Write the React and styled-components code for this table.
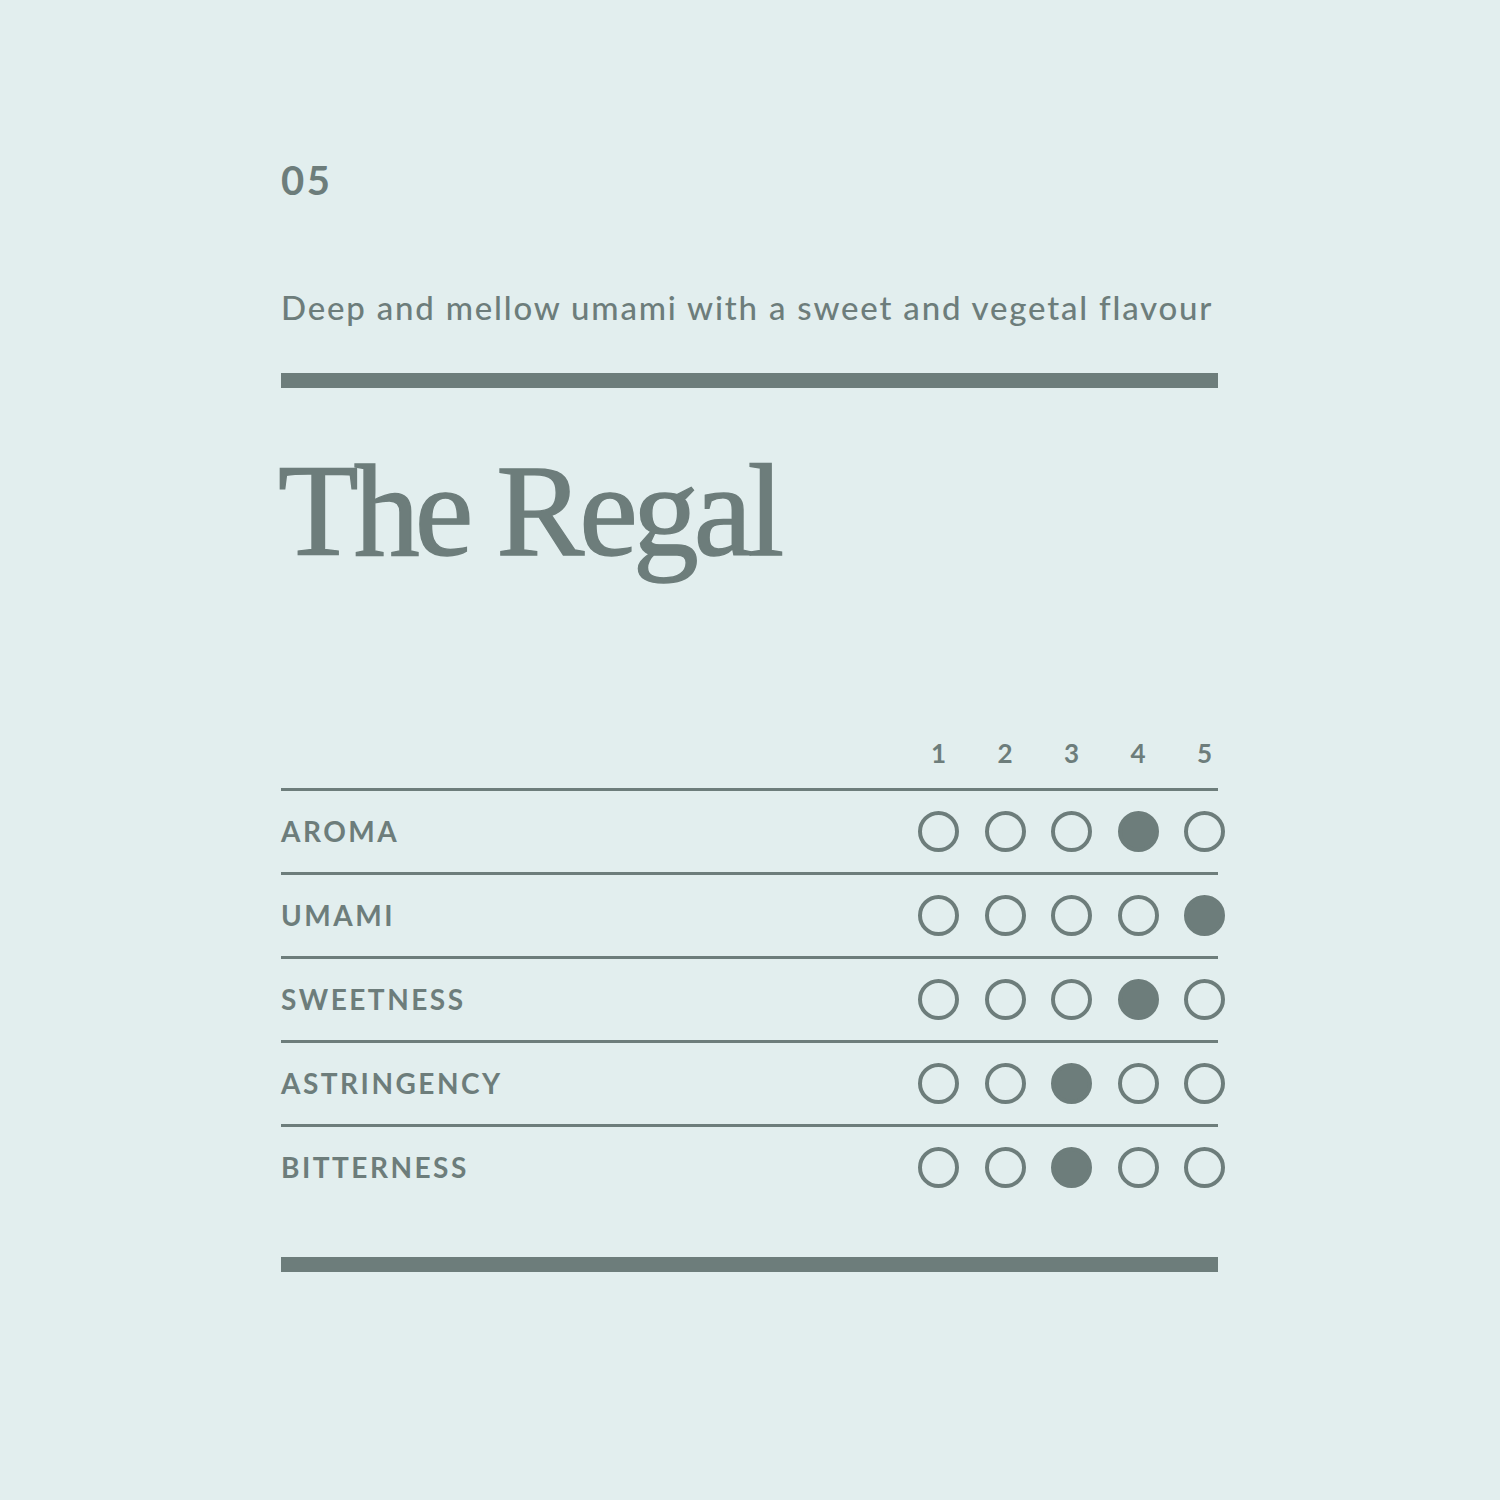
import React from 'react'
import styled, { createGlobalStyle } from 'styled-components'

const ink = '#6d7d7b'
const paper = '#e2eeee'

const GlobalStyle = createGlobalStyle`
  html, body {
    margin: 0;
    background: ${paper};
  }
  body {
    font-family: Lato, 'Open Sans', sans-serif;
    color: ${ink};
  }
`

const Page = styled.main`
  width: 1500px;
  min-height: 1500px;
  box-sizing: border-box;
  padding: 160px 0 0 281px;
`

const Card = styled.section`
  width: 937px;
  display: flex;
  flex-direction: column;
`

const Number = styled.div`
  font-size: 40px;
  font-weight: 700;
  line-height: 1;
  letter-spacing: 2.5px;
`

const Tagline = styled.p`
  margin: 88px 0 0;
  font-size: 33px;
  font-weight: 500;
  line-height: 1.2;
  letter-spacing: 1.8px;
  white-space: nowrap;
`

const Bar = styled.div`
  height: 15px;
  background: ${ink};
  margin-top: ${(p) => p.$top}px;
`

const Title = styled.h1`
  margin: 57px 0 0 -3px;
  font-family: 'Liberation Serif', 'DejaVu Serif', serif;
  font-weight: 400;
  font-size: 132px;
  line-height: 1;
  letter-spacing: -5px;
  -webkit-text-stroke: 1.4px ${ink};
`

const Table = styled.div`
  margin-top: 161px;
  display: flex;
  flex-direction: column;
`

const HeadRow = styled.div`
  display: flex;
  justify-content: flex-end;
  padding-bottom: 20px;
  border-bottom: 3px solid ${ink};
`

const Scale = styled.div`
  display: flex;
  gap: 25.5px;
  margin-right: -7px;
`

const Num = styled.span`
  width: 41px;
  text-align: center;
  font-size: 26px;
  font-weight: 700;
  line-height: 30px;
`

const Row = styled.div`
  display: flex;
  align-items: center;
  justify-content: space-between;
  height: 81px;
  border-bottom: ${(p) => (p.$last ? 'none' : `3px solid ${ink}`)};
`

const Label = styled.span`
  font-size: 28px;
  font-weight: 700;
  letter-spacing: 2.5px;
`

const Dot = styled.span`
  width: 41px;
  height: 41px;
  box-sizing: border-box;
  border-radius: 50%;
  border: 4.5px solid ${ink};
  background: ${(p) => (p.$on ? ink : 'transparent')};
`

const notes = [
  { name: 'AROMA', value: 4 },
  { name: 'UMAMI', value: 5 },
  { name: 'SWEETNESS', value: 4 },
  { name: 'ASTRINGENCY', value: 3 },
  { name: 'BITTERNESS', value: 3 },
]

const steps = [1, 2, 3, 4, 5]

const App = () => (
  <>
    <GlobalStyle />
    <Page>
      <Card>
        <Number>05</Number>
        <Tagline>Deep and mellow umami with a sweet and vegetal flavour</Tagline>
        <Bar $top={45} />
        <Title>The Regal</Title>
        <Table>
          <HeadRow>
            <Scale>
              {steps.map((s) => (
                <Num key={s}>{s}</Num>
              ))}
            </Scale>
          </HeadRow>
          {notes.map((n, i) => (
            <Row key={n.name} $last={i === notes.length - 1}>
              <Label>{n.name}</Label>
              <Scale>
                {steps.map((s) => (
                  <Dot key={s} $on={s === n.value} />
                ))}
              </Scale>
            </Row>
          ))}
        </Table>
        <Bar $top={49} />
      </Card>
    </Page>
  </>
)

export default App
